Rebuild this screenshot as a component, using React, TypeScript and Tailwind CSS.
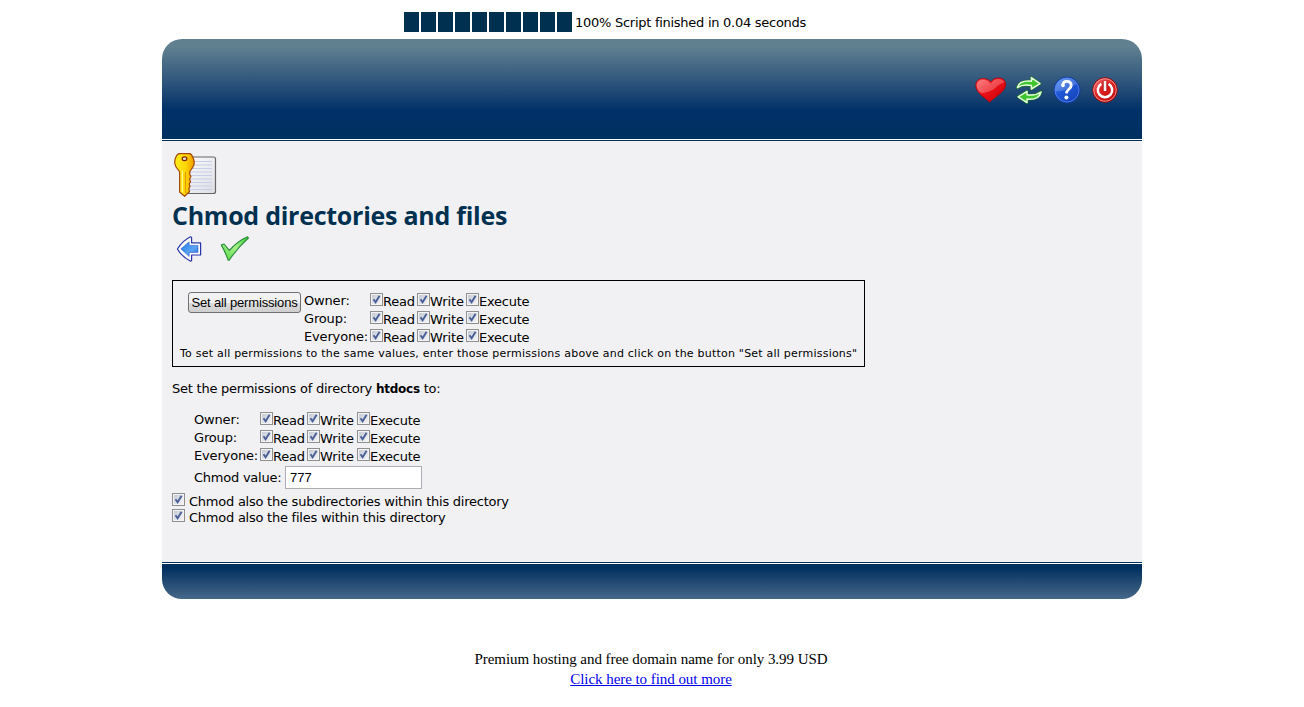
import { useState } from "react";

const HeartIcon = () => (
  <svg width="32" height="28" viewBox="0 0 32 28">
    <defs>
      <linearGradient id="heart" x1="0" y1="0" x2="1" y2="1">
        <stop offset="0" stopColor="#ff5c5c" />
        <stop offset="0.45" stopColor="#ec1018" />
        <stop offset="1" stopColor="#c00008" />
      </linearGradient>
    </defs>
    <path d="M14.6 26.1C11 22 0.8 17.2 0.8 9.4C0.8 5 4 2.6 8.2 2.6C11.6 2.6 14 4 15.8 6C17.6 3.6 20.4 2 23.8 2C28 2 30.6 4.8 30.6 8.4C30.6 15.6 20.1 20.6 14.6 26.1Z" fill="url(#heart)" stroke="#b3000a" strokeWidth="0.9" />
    <path d="M2 11.4C1.4 6.2 4.4 3.7 8.2 3.7C11.8 3.7 14.2 5.4 15.8 7.8C17.6 5 20.2 3.1 23.8 3.1C26.6 3.1 28.6 4.4 29.4 6.6C22 8 21 13.6 14 15.6C9 17 5 19 2 11.4Z" fill="#fff" opacity="0.25" />
  </svg>
);

const RefreshIcon = () => (
  <svg width="28" height="30" viewBox="0 0 28 30" className="-mt-px">
    <g fill="#3fb53a" stroke="#1b7420" strokeWidth="2.8" strokeLinejoin="round">
      <path d="M2.4 12.6C3.6 7.4 7.6 5.4 16.4 6.2V2.6L25 8.6L16.4 14V10.6C11 9.6 6.6 9.8 2.4 12.6Z" />
      <path d="M26 17C24.6 22.6 20.8 24.8 12 24V27.6L3.2 21.8L12 16.4V19.8C17.6 20.6 21.8 20 26 17Z" />
    </g>
    <g fill="#3fc52f" stroke="#e6ffe0" strokeWidth="1.5" strokeLinejoin="round">
      <path d="M2.4 12.6C3.6 7.4 7.6 5.4 16.4 6.2V2.6L25 8.6L16.4 14V10.6C11 9.6 6.6 9.8 2.4 12.6Z" />
      <path d="M26 17C24.6 22.6 20.8 24.8 12 24V27.6L3.2 21.8L12 16.4V19.8C17.6 20.6 21.8 20 26 17Z" />
    </g>
  </svg>
);

const HelpIcon = () => (
  <svg width="28" height="28" viewBox="0 0 28 28">
    <defs>
      <linearGradient id="help" x1="0" y1="0" x2="0.7" y2="1">
        <stop offset="0" stopColor="#5c97f5" />
        <stop offset="0.5" stopColor="#1f58d8" />
        <stop offset="1" stopColor="#1742b8" />
      </linearGradient>
    </defs>
    <circle cx="14" cy="14" r="13" fill="url(#help)" stroke="#123a9c" strokeWidth="1" />
    <circle cx="14" cy="14" r="12" fill="none" stroke="#5f90ee" strokeWidth="0.7" />
    <path d="M2.6 15A11.5 11.5 0 0 1 24 8.2C18 9 12 17 2.6 15Z" fill="#fff" opacity="0.18" />
    <path d="M9.7 9.6C9.8 6.4 11.4 5.3 13.8 5.3C16.6 5.3 18.2 6.8 18.2 9.4C18.2 13.2 13.5 13.4 13.4 17.4" fill="none" stroke="#fff" strokeWidth="2.8" />
    <circle cx="10" cy="9.4" r="1.8" fill="#fff" />
    <circle cx="13.4" cy="21.6" r="2" fill="#fff" />
  </svg>
);

const PowerIcon = () => (
  <svg width="28" height="28" viewBox="0 0 28 28">
    <defs>
      <linearGradient id="power" x1="0" y1="0" x2="0.7" y2="1">
        <stop offset="0" stopColor="#f87878" />
        <stop offset="0.5" stopColor="#dd2222" />
        <stop offset="1" stopColor="#c20d0d" />
      </linearGradient>
    </defs>
    <circle cx="14" cy="14" r="12.3" fill="url(#power)" stroke="#8e0a0a" strokeWidth="1" />
    <circle cx="14" cy="14" r="11.3" fill="none" stroke="#f09a9a" strokeWidth="0.9" />
    <path d="M10.4 7.8A7.2 7.2 0 1 0 17.6 7.8" fill="none" stroke="#fff" strokeWidth="2.5" />
    <path d="M14 4.8V15" stroke="#b31515" strokeWidth="4.8" />
    <path d="M14 5V15" stroke="#fff" strokeWidth="2.6" />
  </svg>
);

const KeyIcon = () => (
  <svg width="46" height="48" viewBox="0 0 46 48">
    <defs>
      <linearGradient id="key" x1="0" y1="0" x2="1" y2="0">
        <stop offset="0" stopColor="#ffee22" />
        <stop offset="0.55" stopColor="#ffd800" />
        <stop offset="1" stopColor="#f29a00" />
      </linearGradient>
      <linearGradient id="paper" x1="0" y1="0" x2="1" y2="1">
        <stop offset="0" stopColor="#ffffff" />
        <stop offset="1" stopColor="#dcdce4" />
      </linearGradient>
    </defs>
    <rect x="12.5" y="5" width="31" height="36.5" rx="2" fill="url(#paper)" stroke="#666" strokeWidth="1.2" />
    <path d="M18 9.5H40M18 13H40M18 16.5H40M18 20H40M18 23.5H40M18 27H40M18 30.5H40M18 34H40M18 37.5H40" stroke="#c6cfe6" strokeWidth="1" />
    <path d="M7.4 1.6H17.6C19.4 1.6 20.2 3.6 21 5.6C22.6 9 22.8 12.6 20.6 15.6C19.4 17.2 18.4 18 17.8 19.8V22.5L19 24.5L17.5 27L18.6 29.5L17.2 32L18 34.5L16.8 36.8L17.6 39.5L12.6 44.3L7.6 40V20C6.8 18 5 17 3.8 14.6C2 11 2.6 7.8 4 4.8C4.8 3 5.6 1.6 7.4 1.6Z" fill="url(#key)" stroke="#a34a08" strokeWidth="1.2" strokeLinejoin="round" />
    <path d="M10.4 18.5V40.5" stroke="#fff48a" strokeWidth="1.3" />
    <path d="M13.4 20V41" stroke="#e69200" strokeWidth="1" />
    <ellipse cx="12.5" cy="6.7" rx="2.3" ry="1.9" fill="#e8e0d4" stroke="#7c2504" strokeWidth="1.2" />
  </svg>
);

const BackIcon = () => (
  <svg width="28" height="28" viewBox="0 0 28 28">
    <defs>
      <linearGradient id="back" x1="0" y1="0" x2="1" y2="1">
        <stop offset="0" stopColor="#1e7ae6" />
        <stop offset="0.6" stopColor="#5aa4f4" />
        <stop offset="1" stopColor="#2b6fd6" />
      </linearGradient>
    </defs>
    <path d="M1.4 14C5 8.4 9 4.4 14.6 1.8L15.6 2.4V7.8H24.6V20H15.6V25.6L14.6 26.2C9 23.4 4.4 19.2 1.4 14Z" fill="#fff" stroke="#2734a8" strokeWidth="1.2" strokeLinejoin="round" />
    <path d="M4.8 13.9L13.2 6.8V10.4H22V17.4H13.2V21.4Z" fill="url(#back)" stroke="#2f63c8" strokeWidth="0.6" />
  </svg>
);

const ApplyIcon = () => (
  <svg width="30" height="28" viewBox="0 0 30 28">
    <defs>
      <linearGradient id="apply" x1="1" y1="0" x2="0.2" y2="1">
        <stop offset="0" stopColor="#2fd02f" />
        <stop offset="0.5" stopColor="#a8f08a" />
        <stop offset="1" stopColor="#5cdc4a" />
      </linearGradient>
    </defs>
    <path d="M1.2 9.9L4 9L9.4 15.4C14.6 9.6 20 5 27.6 1.8L28.4 3C21 9.6 14.5 17.3 9.2 25.2H8.2C6.2 19.6 4 14.6 1.2 9.9Z" fill="url(#apply)" stroke="#2a8a3c" strokeWidth="1.1" strokeLinejoin="round" />
  </svg>
);

const Checkbox = () => {
  const [checked, setChecked] = useState(true);

  return (
    <button
      type="button"
      role="checkbox"
      aria-checked={checked}
      onClick={() => setChecked(!checked)}
      className="block size-[13px] shrink-0 border border-[#8e8f8f] bg-[#f4f4f4] p-px"
    >
      <span className="block size-[9px] bg-linear-to-br from-[#c4c9d2] to-[#f4f5f7]">
        {checked && (
          <svg width="9" height="9" viewBox="0 0 9 9">
            <path d="M1.5 4.2L3.6 7.2L7.6 0.8" fill="none" stroke="#4a5f97" strokeWidth="1.9" />
          </svg>
        )}
      </span>
    </button>
  );
};

const rows = ["Owner:", "Group:", "Everyone:"];

const PermissionRows = ({ wide = false }: { wide?: boolean }) => (
  <div>
    {rows.map((row) => (
      <div key={row} className="flex h-[18px]">
        <span className="w-[66px] leading-4 tracking-[-0.16px]">{row}</span>
        <div className="flex w-[47px]">
          <Checkbox />
          <span className="leading-[18px]">Read</span>
        </div>
        <div className={wide ? "flex w-[50px]" : "flex w-[49px]"}>
          <Checkbox />
          <span className="leading-[18px] tracking-[-0.1px]">Write</span>
        </div>
        <div className="flex">
          <Checkbox />
          <span className="leading-[18px]">Execute</span>
        </div>
      </div>
    ))}
  </div>
);

const App = () => {
  return (
    <div className="h-[707px] overflow-hidden bg-white pt-3 font-['DejaVu_Sans',sans-serif] text-[13px] tracking-[-0.24px] whitespace-nowrap text-black">
      <div className="flex h-[27px] items-start pl-[404px]">
        <div className="flex gap-0.5">
          {Array.from({ length: 10 }, (_, i) => (
            <div key={i} className="h-5 w-[15px] bg-[#003050]" />
          ))}
        </div>
        <span className="ml-[3px] leading-[21px] tracking-[-0.27px]">100% Script finished in 0.04 seconds</span>
      </div>

      <div className="mx-auto w-[980px]">
        <div className="flex h-[100px] items-start justify-end gap-2.5 rounded-t-[20px] bg-linear-to-b from-[#608090] from-8% via-[#003068] via-72% to-[#003060] pt-[37px] pr-[23px]">
          <div className="-mr-0.5">
            <HeartIcon />
          </div>
          <RefreshIcon />
          <HelpIcon />
          <PowerIcon />
        </div>
        <div className="h-px bg-white" />

        <div className="h-[423px] border-y border-[#003060] bg-[#f1f1f4] px-2.5 pt-[11px]">
          <KeyIcon />
          <h1 className="h-[35px] font-['Open_Sans',sans-serif] text-[25px] leading-[31px] font-bold tracking-[-0.26px] text-[#003050]">
            Chmod directories and files
          </h1>
          <div className="flex h-[45px] gap-4 pl-1">
            <BackIcon />
            <ApplyIcon />
          </div>

          <div className="h-[87px] w-[693px] border border-black pt-[11px]">
            <div className="flex h-[55px] pl-[15px]">
              <button className="h-[21px] w-[113px] rounded-[3px] border border-[#707070] bg-linear-to-b from-[#f2f2f2] from-50% via-[#dddddd] via-50% to-[#cfcfcf] font-['Liberation_Sans',sans-serif] text-[13px] leading-[19px] tracking-[-0.15px]">
                Set all permissions
              </button>
              <div className="pt-px pl-[3px]">
                <PermissionRows />
              </div>
            </div>
            <p className="pl-[7px] text-[11px] leading-[13px] tracking-[0.22px]">
              To set all permissions to the same values, enter those permissions above and click on the button "Set all permissions"
            </p>
          </div>

          <p className="mt-[14px] h-[31px] leading-4">
            Set the permissions of directory <b className="text-[12px]">htdocs</b> to:
          </p>
          <div className="pl-[22px]">
            <PermissionRows wide />
            <div className="flex h-[27px]">
              <label className="w-[91px] leading-[23px]">Chmod value:</label>
              <input defaultValue="777" className="h-[23px] w-[137px] border border-[#abadb3] bg-white px-1 font-['Liberation_Sans',sans-serif] tracking-normal" />
            </div>
          </div>
          <div className="flex h-4 gap-1">
            <Checkbox />
            <span className="leading-[18px]">Chmod also the subdirectories within this directory</span>
          </div>
          <div className="flex h-4 gap-1">
            <Checkbox />
            <span className="leading-[18px]">Chmod also the files within this directory</span>
          </div>
        </div>

        <div className="h-px bg-white" />
        <div className="h-[35px] rounded-b-[20px] bg-linear-to-b from-[#003060] from-10% to-[#456888]" />
      </div>

      <div className="mt-[50px] pr-0.5 text-center font-['Liberation_Serif',serif] text-[15px] leading-5 tracking-[-0.05px]">
        <p>Premium hosting and free domain name for only 3.99 USD</p>
        <a href="#" className="text-[#0000ee] underline">Click here to find out more</a>
      </div>
    </div>
  );
};

export default App;
